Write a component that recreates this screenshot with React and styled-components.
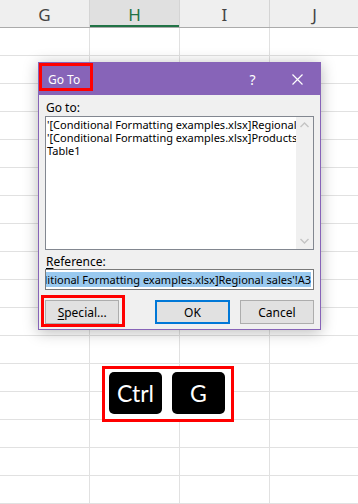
import React from "react";
import styled, { createGlobalStyle } from "styled-components";

const Global = createGlobalStyle`
  html, body { margin: 0; padding: 0; background: #fff; }
  body { font-family: "Segoe UI", "Noto Sans", "Open Sans", sans-serif; }
  * { box-sizing: border-box; }
`;

const Page = styled.div`
  position: relative;
  width: 358px;
  height: 504px;
  overflow: hidden;
  background: #fff;
`;

const HeaderRow = styled.div`
  display: grid;
  grid-template-columns: 90px 90px 90px 90px;
  height: 28px;
  background: #efefef;
  border-bottom: 1px solid #ababab;
`;

const ColHead = styled.div`
  display: flex;
  align-items: center;
  justify-content: center;
  border-right: 1px solid #d4d4d4;
  font-family: "Segoe UI", "Noto Sans", sans-serif;
  font-size: 17px;
  color: ${(p) => (p.$active ? "#217346" : "#444")};
  background: ${(p) => (p.$active ? "#e0e0e0" : "transparent")};
  box-shadow: ${(p) => (p.$active ? "inset 0 -2px 0 #217346" : "none")};
  padding-top: 1px;
`;

const Row = styled.div`
  display: grid;
  grid-template-columns: 90px 90px 90px 90px;
  height: 28px;
  border-bottom: 1px solid #e1e1e1;
`;

const Cell = styled.div`
  border-right: 1px solid #e1e1e1;
`;

const Dialog = styled.div`
  position: absolute;
  left: 38px;
  top: 62px;
  width: 283px;
  height: 268px;
  border: 1px solid #8764b8;
  background: #f0f0f0;
  box-shadow: 0 2px 14px rgba(0, 0, 0, 0.28);
  display: flex;
  flex-direction: column;
  font-family: "Segoe UI", "Noto Sans", sans-serif;
  font-size: 11px;
`;

const TitleBar = styled.div`
  height: 32px;
  flex: none;
  background: #8764b8;
  color: #fff;
  display: flex;
  align-items: center;
  padding-left: 9px;
  font-size: 12px;
`;

const TitleText = styled.span`
  flex: 1;
`;

const TitleBtn = styled.span`
  width: 45px;
  display: flex;
  align-items: center;
  justify-content: center;
  font-size: 14px;
  color: #fff;
`;

const Body = styled.div`
  flex: 1;
  display: flex;
  flex-direction: column;
  padding: 5px 6px 5px 6px;
  color: #000;
`;

const Label = styled.div`
  line-height: ${(p) => p.$lh || 16}px;
  height: ${(p) => p.$lh || 16}px;
  margin-top: ${(p) => p.$mt || 0}px;
  padding-left: 1px;
  font-size: 12px;
`;

const U = styled.span`
  text-decoration: underline;
  text-underline-offset: 2px;
`;

const ListBox = styled.div`
  height: 134px;
  border: 1px solid #828790;
  background: #fff;
  display: flex;
`;

const ListItems = styled.div`
  flex: 1;
  overflow: hidden;
  padding: 1px 0 0 1px;
  line-height: 13px;
  white-space: nowrap;
`;

const Scroll = styled.div`
  width: 17px;
  flex: none;
  background: #f0f0f0;
  display: flex;
  flex-direction: column;
  justify-content: space-between;
  align-items: center;
  padding: 5px 0;
`;

const Input = styled.div`
  height: 21px;
  border: 1px solid #7a7a7a;
  background: #fff;
  display: flex;
  justify-content: flex-end;
  align-items: center;
  overflow: hidden;
  padding-right: 2px;
`;

const Selected = styled.span`
  white-space: nowrap;
  background: #99c9ef;
  line-height: 15px;
  height: 15px;
  flex: none;
`;

const Buttons = styled.div`
  display: flex;
  margin-top: 10px;
  gap: 10px;
`;

const Btn = styled.div`
  width: 75px;
  height: 24px;
  background: #e1e1e1;
  border: ${(p) => (p.$default ? "2px solid #0078d7" : "1px solid #adadad")};
  display: flex;
  align-items: center;
  justify-content: center;
  margin-left: ${(p) => p.$ml || 0}px;
  font-size: 12px;
`;

const RedBox = styled.div`
  position: absolute;
  border: 3px solid #f00;
`;

const KeyBox = styled(RedBox)`
  left: 102px;
  top: 366px;
  width: 132px;
  height: 56px;
  background: #fff;
  display: flex;
  align-items: center;
  gap: 10px;
  padding: 0 0 2px 4px;
`;

const Key = styled.div`
  width: 53px;
  height: 42px;
  background: #000;
  border-radius: 5px;
  color: #fff;
  display: flex;
  align-items: center;
  justify-content: center;
  font-family: Lato, "DejaVu Sans", sans-serif;
  font-size: 23px;
  padding-bottom: 1px;
`;

const Chevron = ({ up }) => (
  <svg width="9" height="6" viewBox="0 0 9 6">
    <path
      d={up ? "M0.5 5 L4.5 1 L8.5 5" : "M0.5 1 L4.5 5 L8.5 1"}
      fill="none"
      stroke="#c4c4c4"
      strokeWidth="1.4"
    />
  </svg>
);

const CloseIcon = () => (
  <svg width="11" height="11" viewBox="0 0 11 11">
    <path d="M0.5 0.5 L10.5 10.5 M10.5 0.5 L0.5 10.5" stroke="#fff" strokeWidth="1.2" />
  </svg>
);

export default function App() {
  const cols = ["G", "H", "I", "J"];
  const rows = Array.from({ length: 17 });
  return (
    <>
      <Global />
      <Page>
        <HeaderRow>
          {cols.map((c) => (
            <ColHead key={c} $active={c === "H"}>
              {c}
            </ColHead>
          ))}
        </HeaderRow>
        {rows.map((_, i) => (
          <Row key={i}>
            {cols.map((c) => (
              <Cell key={c} />
            ))}
          </Row>
        ))}

        <Dialog>
          <TitleBar>
            <TitleText>Go To</TitleText>
            <TitleBtn>?</TitleBtn>
            <TitleBtn>
              <CloseIcon />
            </TitleBtn>
          </TitleBar>
          <Body>
            <Label>Go to:</Label>
            <ListBox>
              <ListItems>
                <div>'[Conditional Formatting examples.xlsx]Regional</div>
                <div>'[Conditional Formatting examples.xlsx]Products</div>
                <div>Table1</div>
              </ListItems>
              <Scroll>
                <Chevron up />
                <Chevron />
              </Scroll>
            </ListBox>
            <Label $mt={4} $lh={15}>
              <U>R</U>eference:
            </Label>
            <Input>
              <Selected>'[Conditional Formatting examples.xlsx]Regional sales'!A3</Selected>
            </Input>
            <Buttons>
              <Btn>
                <span>
                  <U>S</U>pecial...
                </span>
              </Btn>
              <Btn $default $ml={26}>OK</Btn>
              <Btn>Cancel</Btn>
            </Buttons>
          </Body>
        </Dialog>

        <RedBox style={{ left: 39, top: 63, width: 54, height: 28 }} />
        <RedBox style={{ left: 41, top: 295, width: 84, height: 32 }} />

        <KeyBox>
          <Key>Ctrl</Key>
          <Key>G</Key>
        </KeyBox>
      </Page>
    </>
  );
}
